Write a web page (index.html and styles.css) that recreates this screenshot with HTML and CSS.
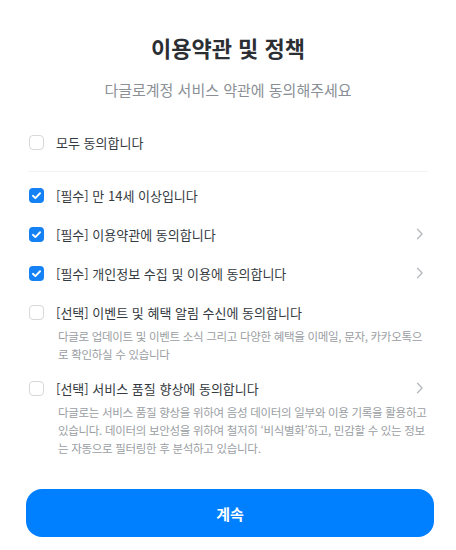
FILE: index.html
```html
<!DOCTYPE html>
<html lang="ko">
<head>
<meta charset="utf-8">
<title>이용약관 및 정책</title>
<link rel="stylesheet" href="styles.css">
</head>
<body>
<main class="page">
  <h1 class="title">이용약관 및 정책</h1>
  <p class="subtitle">다글로계정 서비스 약관에 동의해주세요</p>

  <div class="terms">
    <div class="row">
      <span class="box"></span>
      <span class="label">모두 동의합니다</span>
    </div>
    <div class="divider"></div>
    <ul class="list">
      <li class="item">
        <div class="row">
          <span class="box checked"><svg viewBox="0 0 16 16"><path d="M4.2 8.3l2.6 2.5 5-5.2" /></svg></span>
          <span class="label">[필수] 만 14세 이상입니다</span>
        </div>
      </li>
      <li class="item">
        <div class="row">
          <span class="box checked"><svg viewBox="0 0 16 16"><path d="M4.2 8.3l2.6 2.5 5-5.2" /></svg></span>
          <span class="label">[필수] 이용약관에 동의합니다</span>
          <svg class="chev" viewBox="0 0 8 12"><path d="M1.5 1.2l4.6 4.8-4.6 4.8" /></svg>
        </div>
      </li>
      <li class="item">
        <div class="row">
          <span class="box checked"><svg viewBox="0 0 16 16"><path d="M4.2 8.3l2.6 2.5 5-5.2" /></svg></span>
          <span class="label">[필수] 개인정보 수집 및 이용에 동의합니다</span>
          <svg class="chev" viewBox="0 0 8 12"><path d="M1.5 1.2l4.6 4.8-4.6 4.8" /></svg>
        </div>
      </li>
      <li class="item">
        <div class="row">
          <span class="box"></span>
          <span class="label">[선택] 이벤트 및 혜택 알림 수신에 동의합니다</span>
        </div>
        <p class="desc">다글로 업데이트 및 이벤트 소식 그리고 다양한 혜택을 이메일, 문자, 카카오톡으로 확인하실 수 있습니다</p>
      </li>
      <li class="item">
        <div class="row">
          <span class="box"></span>
          <span class="label">[선택] 서비스 품질 향상에 동의합니다</span>
          <svg class="chev" viewBox="0 0 8 12"><path d="M1.5 1.2l4.6 4.8-4.6 4.8" /></svg>
        </div>
        <p class="desc">다글로는 서비스 품질 향상을 위하여 음성 데이터의 일부와 이용 기록을 활용하고 있습니다. 데이터의 보안성을 위하여 철저히 ‘비식별화’하고, 민감할 수 있는 정보는 자동으로 필터링한 후 분석하고 있습니다.</p>
      </li>
    </ul>
  </div>

  <button class="cta" type="button">계속</button>
</main>
</body>
</html>
```

FILE: styles.css
```css
* { box-sizing: border-box; }
html, body {
  margin: 0;
  padding: 0;
  background: #ffffff;
}
body {
  font-family: "Noto Sans CJK KR", "Noto Sans", sans-serif;
  color: #333333;
}
.page {
  width: 456px;
  padding: 32px 22px 0 22px;
  display: flex;
  flex-direction: column;
}
.title {
  margin: 0;
  text-align: center;
  font-size: 22px;
  line-height: 30px;
  font-weight: 700;
  color: #2b2f34;
}
.subtitle {
  margin: 17px 0 0 0;
  text-align: center;
  font-size: 15px;
  line-height: 22px;
  color: #8b9096;
}
.terms {
  margin-top: 27px;
  padding: 0 6px;
}
.row {
  display: flex;
  align-items: center;
  height: 28px;
  padding-left: 1px;
}
.box {
  width: 15px;
  height: 15px;
  border: 1.5px solid #d6d8da;
  border-radius: 4px;
  flex: none;
  display: flex;
  align-items: center;
  justify-content: center;
  background: #fff;
}
.box.checked {
  border: none;
  background: #1481f5;
}
.box svg {
  width: 15px;
  height: 15px;
  fill: none;
  stroke: #ffffff;
  stroke-width: 2;
  stroke-linecap: round;
  stroke-linejoin: round;
}
.label {
  margin-left: 12px;
  font-size: 13px;
  color: #343a40;
  flex: 1;
}
.chev {
  width: 8px;
  height: 12px;
  margin-right: 4px;
  fill: none;
  stroke: #b5b8bc;
  stroke-width: 1.3;
  stroke-linecap: round;
  stroke-linejoin: round;
  flex: none;
}
.divider {
  height: 1px;
  background: #f1f2f3;
  margin: 15px 0 9px 0;
}
.list {
  list-style: none;
  margin: 0;
  padding: 0;
  display: flex;
  flex-direction: column;
  gap: 11px;
}
.desc {
  margin: 1px 0 0 0;
  padding: 0 0 0 30px;
  font-size: 11.5px;
  letter-spacing: -0.3px;
  line-height: 18px;
  color: #9a9ea3;
}
.cta {
  margin-top: 32px;
  margin-left: 4px;
  width: 408px;
  height: 48px;
  border: none;
  border-radius: 16px;
  background: #0080ff;
  color: #ffffff;
  font-family: "Noto Sans CJK KR", "Noto Sans", sans-serif;
  font-size: 15px;
  font-weight: 700;
}
```
